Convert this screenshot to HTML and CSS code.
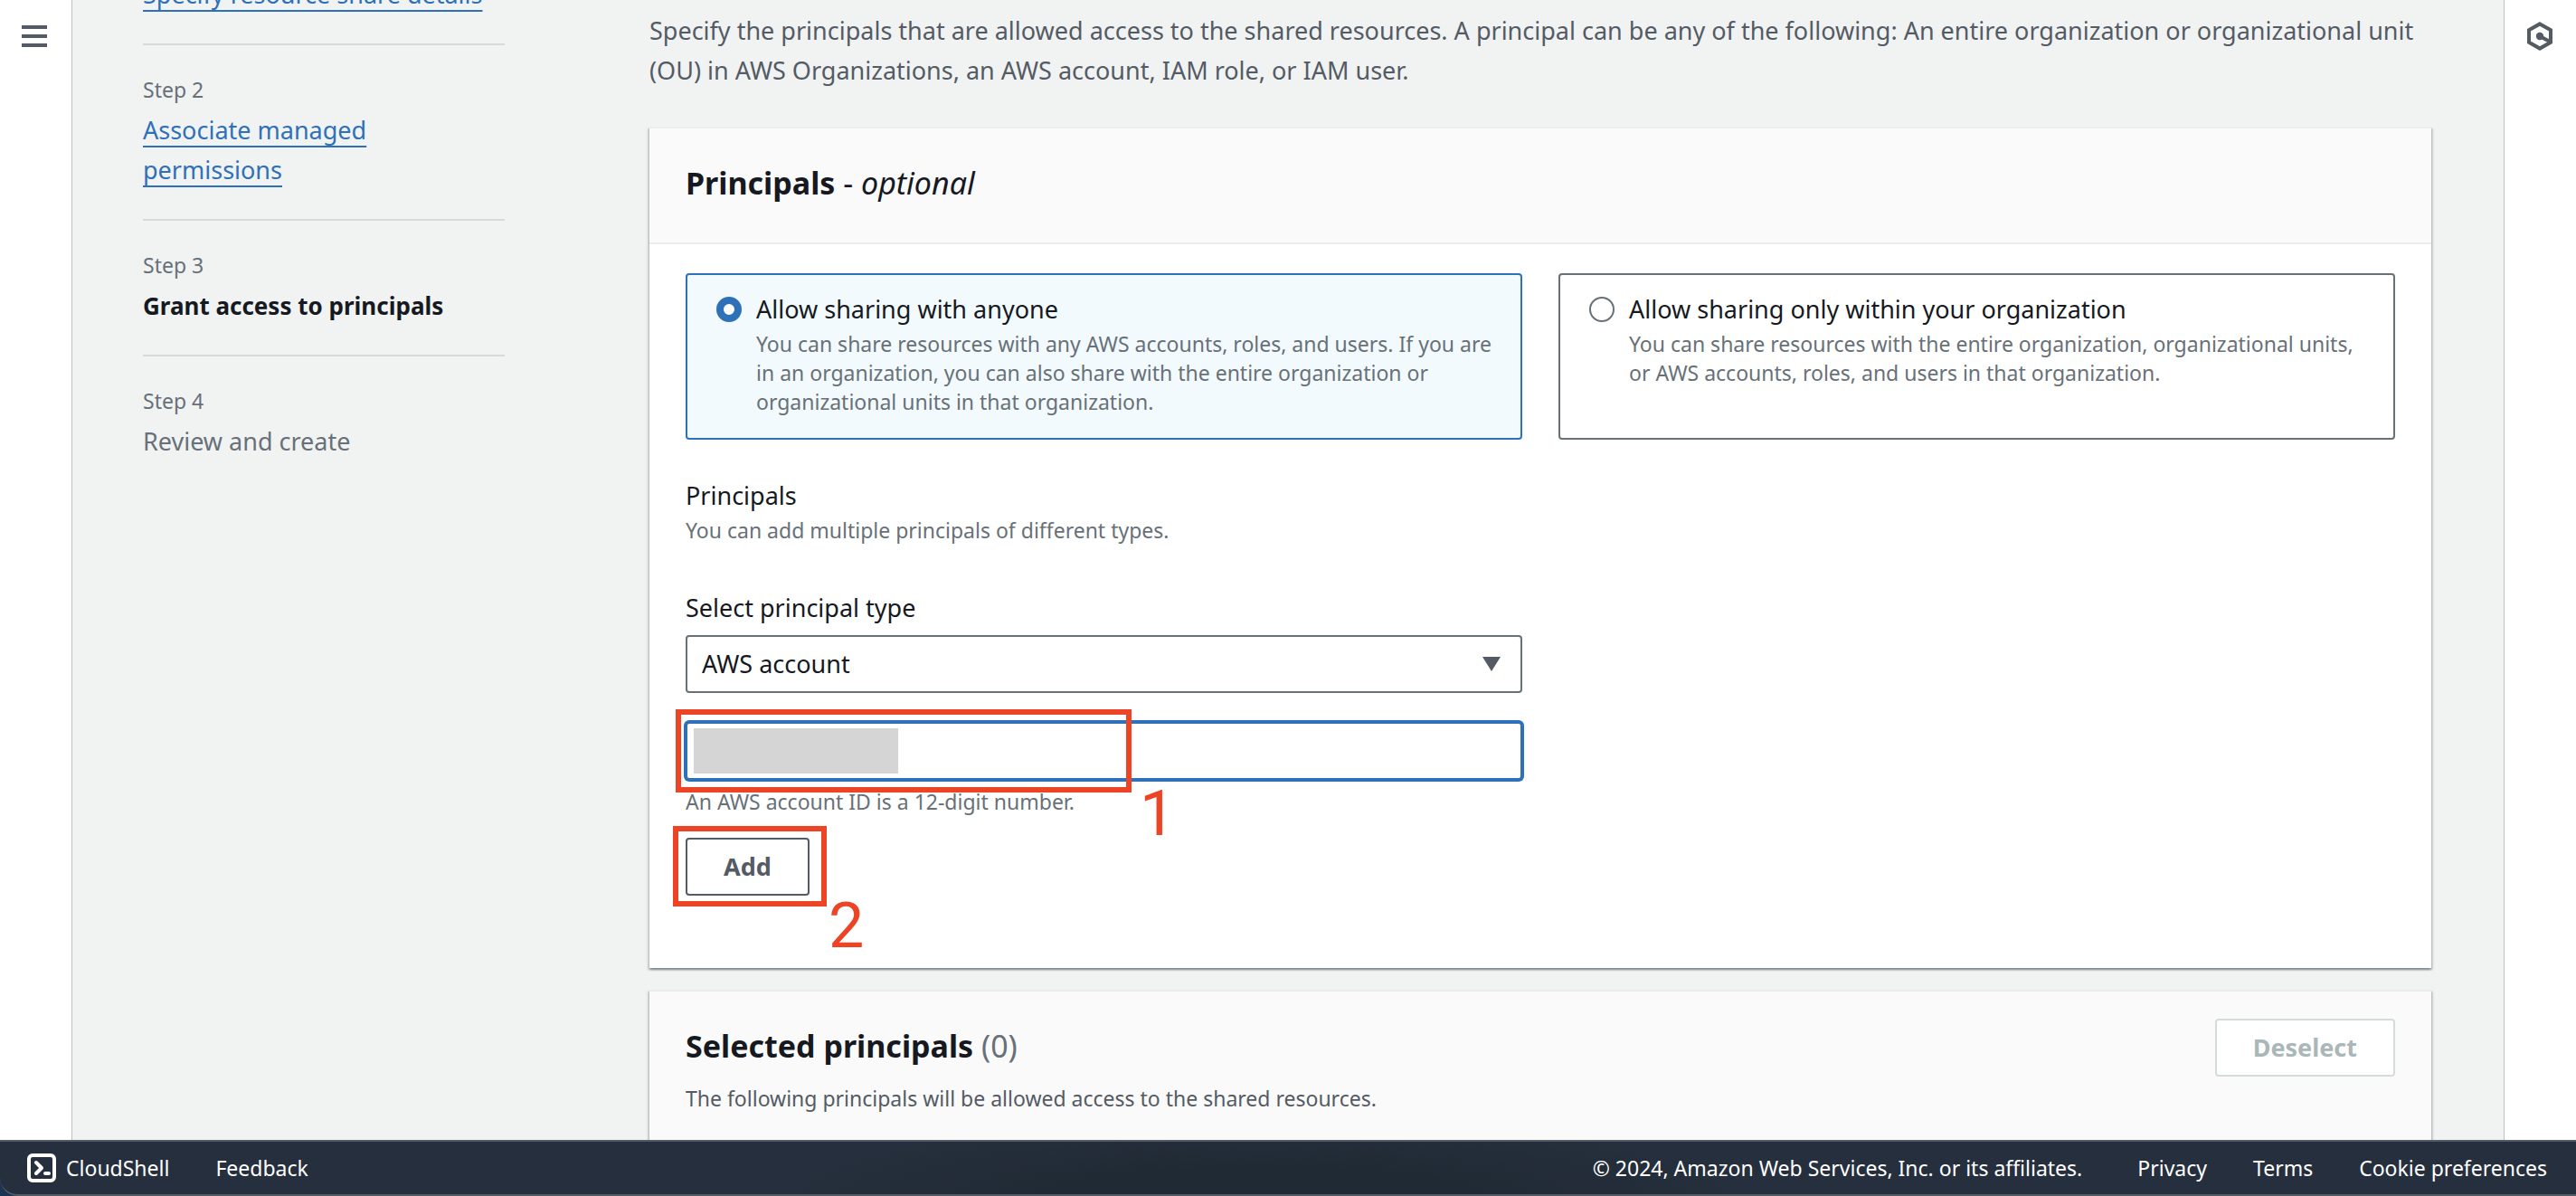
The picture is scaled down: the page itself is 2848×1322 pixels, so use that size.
FILE: index.html
```html
<!DOCTYPE html>
<html lang="en">
<head>
  <meta charset="utf-8">
  <meta name="viewport" content="width=device-width, initial-scale=1">
  <title>Grant access to principals</title>
  <link rel="stylesheet" href="styles.css">
</head>
<body>
  <div class="window">
    <div class="workspace">
      <aside class="rail rail-left">
        <button class="icon-button" type="button" aria-label="Open navigation">
          <svg width="28" height="24" viewBox="0 0 28 24" fill="currentColor" aria-hidden="true">
            <rect width="28" height="4"/>
            <rect y="10" width="28" height="4"/>
            <rect y="20" width="28" height="4"/>
          </svg>
        </button>
      </aside>

      <div class="page">
        <nav class="steps" aria-label="Steps">
          <ol class="step-list">
            <li class="step step-scrolled">
              <a class="step-link" href="#">Specify resource share details</a>
            </li>
            <li class="step">
              <span class="step-number">Step 2</span>
              <a class="step-link" href="#">Associate managed<br>permissions</a>
            </li>
            <li class="step">
              <span class="step-number">Step 3</span>
              <strong class="step-current" aria-current="step">Grant access to principals</strong>
            </li>
            <li class="step">
              <span class="step-number">Step 4</span>
              <span class="step-pending">Review and create</span>
            </li>
          </ol>
        </nav>

        <main class="content">
          <p class="intro">Specify the principals that are allowed access to the shared resources. A principal can be any of the following: An entire organization or organizational unit (OU) in AWS Organizations, an AWS account, IAM role, or IAM user.</p>

          <section class="card">
            <header class="card-header">
              <h2 class="card-title">Principals <span class="optional">- <i>optional</i></span></h2>
            </header>
            <form class="card-body">
              <div class="tiles">
                <label class="tile">
                  <input class="radio" type="radio" name="sharing" checked>
                  <span class="tile-text">
                    <span class="tile-label">Allow sharing with anyone</span>
                    <span class="tile-description">You can share resources with any AWS accounts, roles, and users. If you are in an organization, you can also share with the entire organization or organizational units in that organization.</span>
                  </span>
                </label>
                <label class="tile">
                  <input class="radio" type="radio" name="sharing">
                  <span class="tile-text">
                    <span class="tile-label">Allow sharing only within your organization</span>
                    <span class="tile-description">You can share resources with the entire organization, organizational units, or AWS accounts, roles, and users in that organization.</span>
                  </span>
                </label>
              </div>

              <div class="group">
                <h3 class="field-label">Principals</h3>
                <p class="hint">You can add multiple principals of different types.</p>
              </div>

              <div class="fields">
                <label class="field-label" for="principal-type">Select principal type</label>
                <div class="select-wrap">
                  <select class="control" id="principal-type">
                    <option>AWS account</option>
                  </select>
                </div>
                <div class="input-wrap">
                  <input class="control control-focused" type="text" aria-label="AWS account ID" aria-describedby="account-hint">
                  <span class="redaction"></span>
                  <span class="callout callout-input"></span>
                  <span class="callout-number number-input">1</span>
                </div>
                <p class="hint" id="account-hint">An AWS account ID is a 12-digit number.</p>
              </div>

              <div class="add-wrap">
                <button class="button" type="button">Add</button>
                <span class="callout callout-add"></span>
                <span class="callout-number number-add">2</span>
              </div>
            </form>
          </section>

          <section class="card">
            <header class="card-header">
              <div>
                <h2 class="card-title">Selected principals <span class="counter">(0)</span></h2>
                <p class="card-description">The following principals will be allowed access to the shared resources.</p>
              </div>
              <button class="button" type="button" disabled>Deselect</button>
            </header>
          </section>
        </main>
      </div>

      <aside class="rail rail-right">
        <button class="icon-button" type="button" aria-label="Open assistant">
          <svg width="32" height="32" viewBox="0 0 32 32" fill="none" stroke="currentColor" stroke-width="4" aria-hidden="true">
            <path d="M16 2.400 L28 9.200 V22.800 L16 29.600 L4 22.800 V9.200 Z"/>
            <path d="M16 16 L27 22"/>
            <circle cx="16" cy="16" r="4.200" fill="currentColor" stroke="none"/>
          </svg>
        </button>
      </aside>
    </div>

    <footer class="footer">
      <a class="footer-link shell-link" href="#">
        <svg width="32" height="32" viewBox="0 0 32 32" fill="none" stroke="currentColor" stroke-width="4" aria-hidden="true">
          <rect x="2" y="2" width="28" height="28" rx="4"/>
          <path d="M10 10 L16 16 L10 22" stroke-linecap="round" stroke-linejoin="round"/>
          <path d="M20 22 H24" stroke-linecap="round"/>
        </svg>
        CloudShell
      </a>
      <a class="footer-link" href="#">Feedback</a>
      <span class="copyright">© 2024, Amazon Web Services, Inc. or its affiliates.</span>
      <a class="footer-link" href="#">Privacy</a>
      <a class="footer-link" href="#">Terms</a>
      <a class="footer-link" href="#">Cookie preferences</a>
    </footer>
  </div>
</body>
</html>
```
FILE: styles.css
```css
:root {
  --ink: #16191f;
  --body: #545b64;
  --muted: #687078;
  --link: #2e71b8;
  --line: #d5dbdb;
  --soft-line: #eaeded;
  --page: #f1f3f3;
  --mark: #ec4424;
}

* {
  box-sizing: border-box;
}

body {
  margin: 0;
  background: #1c3454;
  color: var(--ink);
  font-family: "Noto Sans", "Open Sans", sans-serif;
  font-size: 27px;
  line-height: 44px;
}

h2, h3, p, ol {
  margin: 0;
  padding: 0;
}

button, input, select {
  font: inherit;
}

.window {
  display: flex;
  flex-direction: column;
  height: 100vh;
  overflow: hidden;
}

.workspace {
  display: flex;
  flex: 1;
  min-height: 0;
  overflow: hidden;
  background: var(--page);
}

/* Side rails */
.rail {
  flex: none;
  width: 80px;
  background: #fff;
}

.rail-left {
  padding: 28px 24px;
  border-right: 1px solid #b9c2c4;
}

.rail-right {
  padding: 24px 23px;
  border-left: 1px solid #b9c2c4;
}

.icon-button {
  display: block;
  padding: 0;
  border: 0;
  background: none;
  color: var(--body);
}

.icon-button svg {
  display: block;
}

.page {
  display: flex;
  flex: 1;
  gap: 160px;
  min-width: 0;
  padding: 0 80px 0 78px;
}

/* Wizard steps */
.steps {
  flex: none;
  width: 400px;
}

.step-list {
  list-style: none;
}

.step {
  padding: 26px 0 32px;
  border-bottom: 2px solid var(--line);
}

.step-scrolled {
  margin-top: -28px;
  padding-top: 0;
}

.step:last-child {
  border-bottom: 0;
}

.step-number {
  display: block;
  color: var(--muted);
  font-size: 23px;
  line-height: 46px;
}

.step-link {
  color: var(--link);
  text-decoration: underline;
  text-decoration-thickness: 2px;
  text-decoration-skip-ink: none;
  text-underline-offset: 7px;
}

.step-current {
  font-size: 26px;
  font-weight: 700;
}

.step-pending {
  color: var(--muted);
}

/* Content */
.content {
  flex: 1;
  min-width: 0;
}

.intro {
  padding: 12px 0 40px;
  color: var(--body);
}

.card {
  margin-bottom: 24px;
  border-top: 2px solid var(--soft-line);
  background: #fff;
  box-shadow: 0 2px 2px rgba(0, 28, 36, 0.3), 2px 2px 2px rgba(0, 28, 36, 0.15), -2px 2px 2px rgba(0, 28, 36, 0.15);
}

.card-header {
  display: flex;
  align-items: flex-start;
  justify-content: space-between;
  padding: 30px 40px 36px;
  border-bottom: 2px solid var(--soft-line);
  background: #fafafa;
}

.card-title {
  margin: 8px 0;
  font-size: 34px;
  font-weight: 700;
  line-height: 44px;
}

.optional,
.counter {
  font-weight: 400;
}

.counter {
  color: var(--muted);
}

.card-description {
  padding: 12px 0;
  color: var(--body);
  font-size: 23px;
  line-height: 32px;
}

.card-body {
  padding: 32px 40px 80px;
}

.tiles {
  display: grid;
  grid-template-columns: 1fr 1fr;
  gap: 40px;
}

.tile {
  display: flex;
  gap: 16px;
  padding: 16px 24px 24px 32px;
  border: 2px solid var(--muted);
  border-radius: 4px;
}

.tile:has(:checked) {
  border-color: var(--link);
  background: #f2fafd;
}

.radio {
  flex: none;
  width: 28px;
  height: 28px;
  margin: 8px 0;
  appearance: none;
  border: 2px solid var(--muted);
  border-radius: 50%;
  background: #fff;
}

.radio:checked {
  border: 8px solid var(--link);
}

.tile-label,
.tile-description {
  display: block;
}

.tile-description,
.hint {
  color: var(--muted);
  font-size: 23px;
  line-height: 32px;
}

.group {
  padding: 40px 0 48px;
}

.field-label {
  display: block;
  font-size: 27px;
  font-weight: 400;
}

.fields {
  width: calc(50% - 20px);
}

.control {
  display: block;
  width: 100%;
  height: 64px;
  padding: 0 16px;
  appearance: none;
  border: 2px solid var(--muted);
  border-radius: 4px;
  background: #fff;
  color: var(--ink);
}

.control-focused {
  border-color: var(--link);
  box-shadow: 0 0 0 2px var(--link);
}

.select-wrap {
  position: relative;
  margin: 8px 0 32px;
}

.select-wrap::after {
  content: "";
  position: absolute;
  top: 24px;
  right: 24px;
  width: 20px;
  height: 16px;
  background: var(--body);
  clip-path: polygon(0 0, 100% 0, 50% 100%);
  pointer-events: none;
}

.input-wrap {
  position: relative;
  margin-bottom: 8px;
}

.add-wrap {
  position: relative;
  width: max-content;
  margin-top: 24px;
}

.button {
  display: block;
  flex: none;
  height: 64px;
  padding: 0 40px;
  border: 2px solid var(--body);
  border-radius: 4px;
  background: #fff;
  color: var(--body);
  font-weight: 700;
}

.button:disabled {
  border-color: var(--line);
  color: #aab7b8;
}

/* Annotations drawn over the form */
.redaction {
  position: absolute;
  top: 7px;
  left: 9px;
  width: 226px;
  height: 50px;
  background: #d5d5d5;
}

.callout {
  position: absolute;
  border: 6px solid var(--mark);
}

.callout-input {
  top: -14px;
  left: -11px;
  width: 504px;
  height: 92px;
}

.callout-add {
  top: -13px;
  left: -14px;
  width: 170px;
  height: 89px;
}

.callout-number {
  position: absolute;
  color: var(--mark);
  font-family: Roboto, "Liberation Sans", sans-serif;
  font-size: 70px;
  line-height: 72px;
}

.number-input {
  top: 65px;
  left: 502px;
}

.number-add {
  top: 61px;
  left: 158px;
}

/* Footer bar */
.footer {
  display: flex;
  flex: none;
  align-items: center;
  gap: 51px;
  height: 62px;
  padding: 0 32px 0 30px;
  border: solid var(--body);
  border-width: 2px 0;
  border-bottom-left-radius: 20px;
  background: radial-gradient(ellipse 560px 100px at 49% 120%, #202a34 40%, #262f3d 100%);
  color: #fff;
  font-size: 23px;
}

.footer-link {
  color: inherit;
  text-decoration: none;
}

.shell-link {
  display: flex;
  align-items: center;
  gap: 11px;
}

.copyright {
  margin-right: 10px;
  margin-left: auto;
}
```
